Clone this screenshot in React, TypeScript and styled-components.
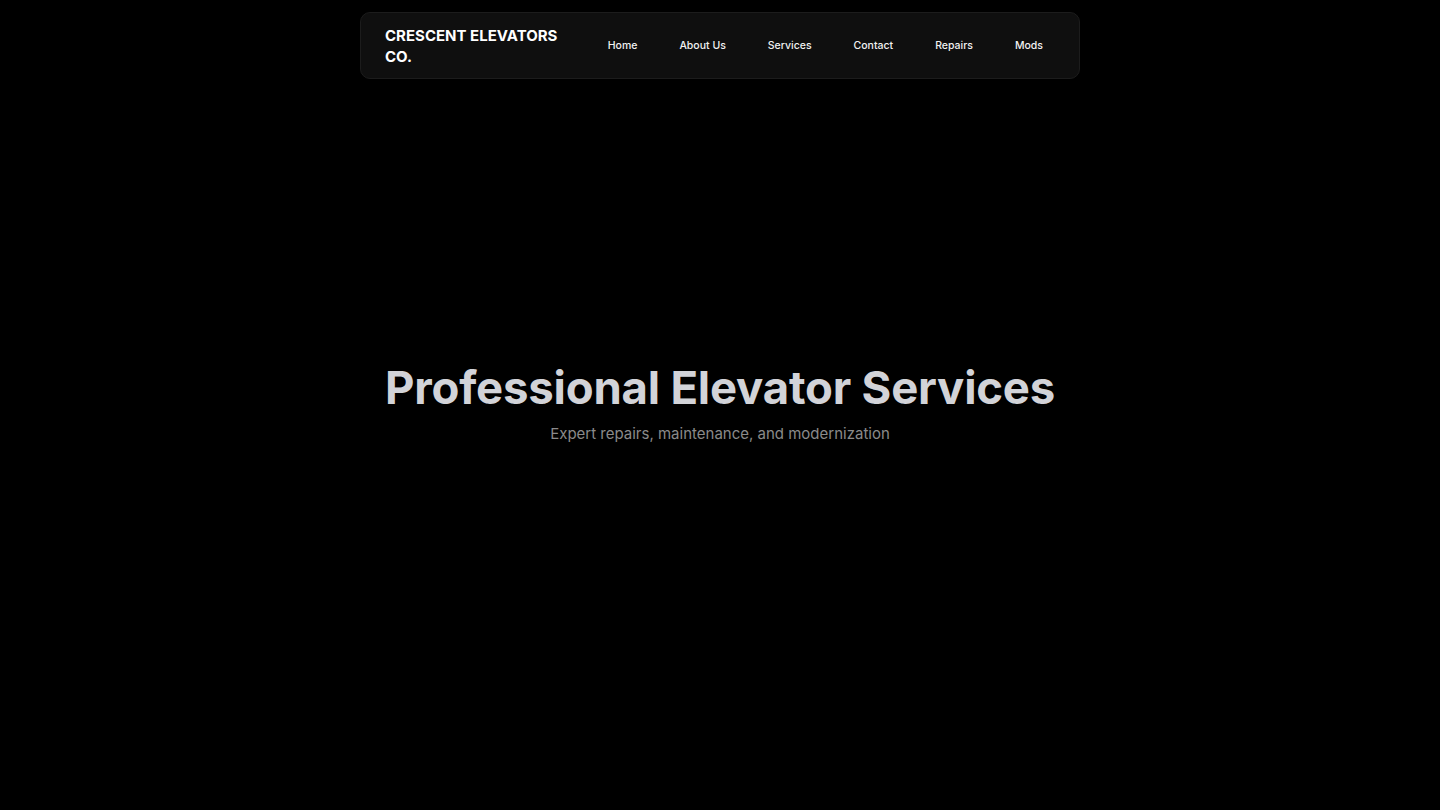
import React from "react";
import styled, { createGlobalStyle } from "styled-components";

const Global = createGlobalStyle`
  html, body { margin: 0; padding: 0; background: #000; }
  body { font-family: Inter, "Noto Sans", sans-serif; color: #fff; }
  * { box-sizing: border-box; }
`;

const Page = styled.div`
  min-height: 100vh;
  background: #000;
`;

const Header = styled.header`
  position: fixed;
  top: 12px;
  left: 50%;
  transform: translateX(-50%);
  width: 720px;
  height: 67px;
  display: flex;
  align-items: center;
  justify-content: space-between;
  padding: 0 15px 0 24px;
  background: #0f0f0f;
  border: 1px solid #1c1c1c;
  border-radius: 10px;
  z-index: 10;
`;

const Logo = styled.div`
  width: 190px;
  font-size: 15px;
  font-weight: 700;
  line-height: 21px;
  color: #fff;
`;

const NavList = styled.nav`
  display: flex;
  align-items: center;
`;

const NavLink = styled.a`
  padding: 8px 21px;
  font-size: 10.5px;
  font-weight: 500;
  line-height: 14px;
  color: #f2f2f2;
  text-decoration: none;
`;

const Hero = styled.main`
  min-height: 100vh;
  display: flex;
  flex-direction: column;
  align-items: center;
  justify-content: center;
  text-align: center;
  padding-bottom: 6px;
`;

const Title = styled.h1`
  margin: 0;
  font-size: 45.5px;
  font-weight: 700;
  line-height: 1.2;
  color: #d2d3d8;
  letter-spacing: -0.2px;
`;

const Subtitle = styled.p`
  margin: 9px 0 0;
  font-size: 15px;
  color: #8a8a8a;
`;

const links = ["Home", "About Us", "Services", "Contact", "Repairs", "Mods"];

export default function App() {
  return (
    <Page>
      <Global />
      <Header>
        <Logo>CRESCENT ELEVATORS CO.</Logo>
        <NavList>
          {links.map((l) => (
            <NavLink key={l} href="#">
              {l}
            </NavLink>
          ))}
        </NavList>
      </Header>
      <Hero>
        <Title>Professional Elevator Services</Title>
        <Subtitle>Expert repairs, maintenance, and modernization</Subtitle>
      </Hero>
    </Page>
  );
}
